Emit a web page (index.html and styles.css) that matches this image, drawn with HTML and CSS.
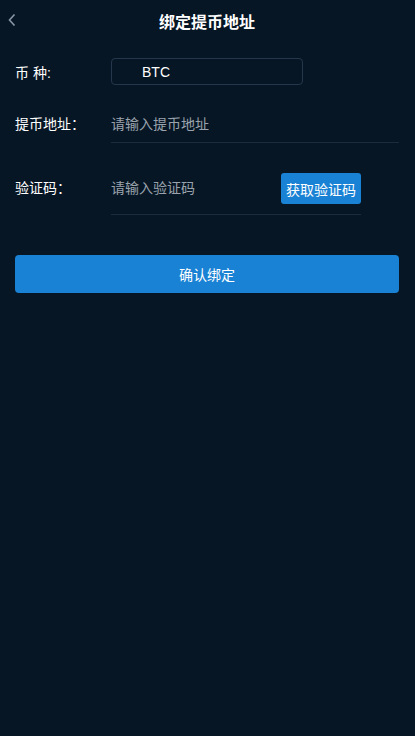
FILE: index.html
```html
<!DOCTYPE html>
<html lang="zh">
<head>
<meta charset="utf-8">
<link rel="stylesheet" href="styles.css">
</head>
<body>
<div class="page">
  <header class="header">
    <span class="back"><svg width="10" height="14" viewBox="0 0 10 14"><path d="M7.5 1.5 L2.5 7 L7.5 12.5" fill="none" stroke="#8a97a6" stroke-width="1.6"/></svg></span>
    <h1 class="title">绑定提币地址</h1>
  </header>
  <div class="form">
    <div class="row row-coin">
      <span class="label">币 种:</span>
      <div class="coin-box">BTC</div>
    </div>
    <div class="row row-addr">
      <span class="label">提币地址：</span>
      <div class="field field-wide"><span class="ph">请输入提币地址</span></div>
    </div>
    <div class="row row-code">
      <span class="label label-code">验证码：</span>
      <div class="field field-code"><span class="ph">请输入验证码</span><span class="code-btn">获取验证码</span></div>
    </div>
  </div>
  <div class="submit">确认绑定</div>
</div>
</body>
</html>
```
FILE: styles.css
```css
* { box-sizing: border-box; }
html, body { margin: 0; padding: 0; }
body {
  background: #071624;
  font-family: "Liberation Sans", "Noto Sans CJK SC", sans-serif;
  color: #ffffff;
  width: 415px;
  height: 736px;
}
.page { padding: 0 16px 0 15px; }
.header {
  position: relative;
  height: 46px;
  display: flex;
  align-items: center;
  justify-content: center;
}
.back {
  position: absolute;
  left: -8px;
  top: 13px;
  display: flex;
}
.title {
  margin: 0;
  font-size: 16px;
  font-weight: bold;
  line-height: 46px;
}
.form { display: flex; flex-direction: column; }
.row { display: flex; align-items: center; font-size: 14px; }
.label { width: 96px; flex: none; }
.row-coin { margin-top: 12px; height: 27px; }
.coin-box {
  width: 192px;
  height: 27px;
  border: 1px solid #24374c;
  border-radius: 4px;
  padding-left: 30px;
  display: flex;
  align-items: center;
  font-size: 14px;
}
.row-addr { margin-top: 24px; align-items: flex-start; }
.row-addr .label { line-height: 31px; }
.field {
  display: flex;
  border-bottom: 1px solid #1b2a3c;
}
.field-wide { flex: 1; height: 34px; align-items: flex-start; }
.field-wide .ph { line-height: 31px; }
.ph { color: #9aa3ad; }
.row-code { margin-top: 30px; align-items: flex-start; }
.label-code { line-height: 31px; }
.field-code {
  width: 250px;
  height: 42px;
  justify-content: space-between;
  align-items: flex-start;
}
.field-code .ph { line-height: 31px; }
.code-btn {
  background: #1a82d4;
  border-radius: 3px;
  width: 80px;
  height: 31px;
  display: flex;
  align-items: center;
  justify-content: center;
  font-size: 14px;
  color: #fff;
}
.submit {
  margin-top: 40px;
  height: 38px;
  background: #1a82d4;
  border-radius: 4px;
  display: flex;
  align-items: center;
  justify-content: center;
  font-size: 14px;
}
```
